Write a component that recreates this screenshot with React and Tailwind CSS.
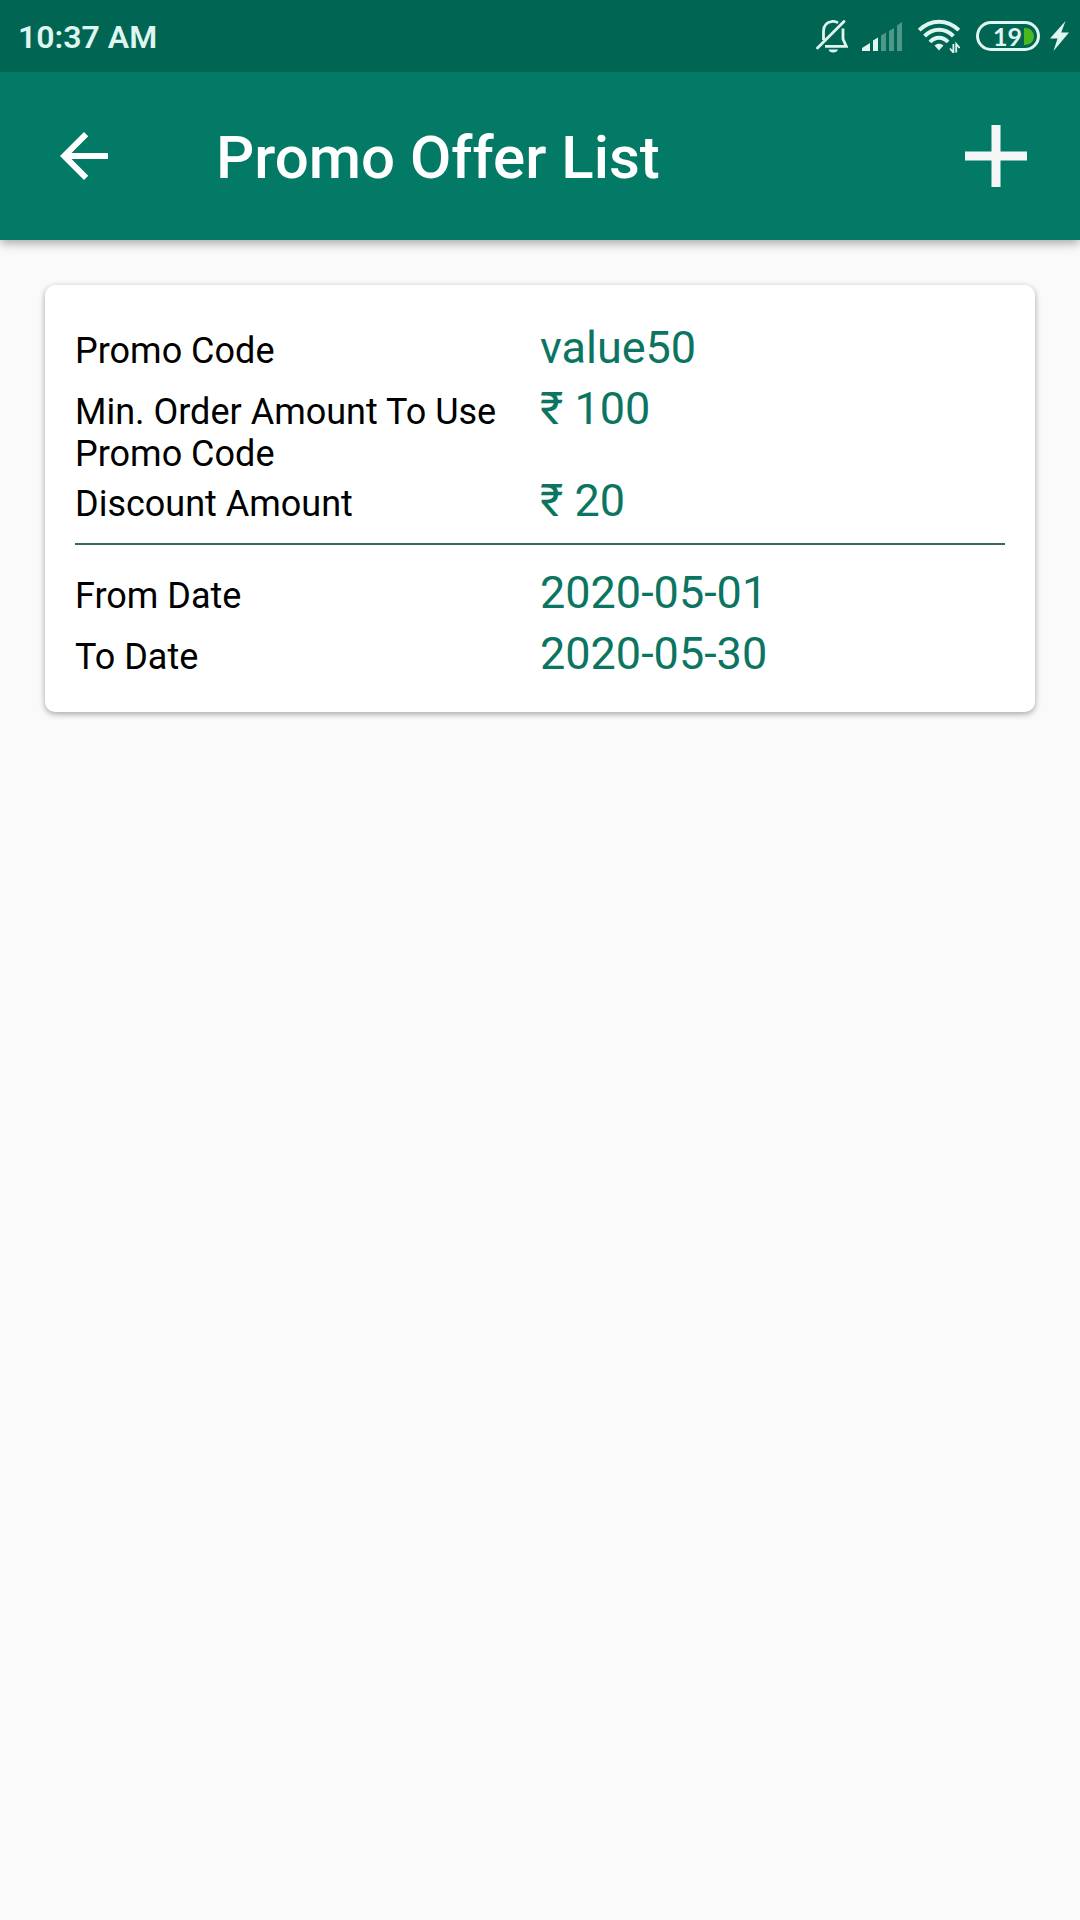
import React from 'react';
import { MdArrowBack } from 'react-icons/md';

const offer = [
  { label: 'Promo Code', value: 'value50' },
  { label: 'Min. Order Amount To Use Promo Code', value: '₹ 100' },
  { label: 'Discount Amount', value: '₹ 20' },
];

const validity = [
  { label: 'From Date', value: '2020-05-01' },
  { label: 'To Date', value: '2020-05-30' },
];

function StatusBar() {
  return (
    <div className="flex h-[72px] items-center justify-between bg-[#006653] pl-[18px] pr-[11px] text-[#dff5ef]">
      <span className="pt-[2px] text-[32px] font-semibold leading-[38px]">10:37 AM</span>
      <div className="flex items-center gap-4">
        <div className="flex items-center gap-[14px]">
          {/* Muted bell */}
          <svg className="h-[34px] w-8" viewBox="0 0 32 34" fill="none" stroke="currentColor" strokeWidth="2.8">
            <path d="M7.5 21V12.5C7.5 6.5 11 3 16.5 2.4C18.5 2.2 20.5 2.8 22 3.8" />
            <path d="M27 9.5V20L30.3 27.3H9" />
            <path d="M1.5 29L28 2.5" strokeLinecap="round" />
            <path d="M12.5 30.5H22C21.4 32.6 19.8 33.4 17.2 33.4C14.6 33.4 13 32.6 12.5 30.5Z" fill="currentColor" stroke="none" />
          </svg>

          {/* Mobile signal, two bars */}
          <svg className="h-[30px] w-10" viewBox="0 0 40 30" fill="currentColor">
            <path d="M0 30V27L8 22V30Z" />
            <path d="M11 30V19.5L16 16.5V30Z" />
            <g opacity="0.35">
              <path d="M19 30V14.5L24 11.5V30Z" />
              <path d="M27 30V10L32 7V30Z" />
              <path d="M35 30V4.5L40 1V30Z" />
            </g>
          </svg>
        </div>

        {/* Wi-Fi with data arrows */}
        <svg className="h-[34px] w-[42px]" viewBox="0 0 42 34" fill="none" stroke="currentColor" strokeWidth="4">
          <path d="M1.2 11.2C12.5 -0.2 29.5 -0.2 40.8 11.2" />
          <path d="M6.6 17.2C14.8 8.6 27.2 8.6 35.4 17.2" />
          <path d="M12 23C17.2 17.4 24.8 17.4 30 23" />
          <path d="M16.5 26.6C19 24.2 23 24.2 25.5 26.6L21 31.4Z" fill="currentColor" stroke="none" />
          <path d="M35.4 25V33.5L32 29.5M38.2 33.5V25L41.6 29" strokeWidth="1.8" />
        </svg>

        <div className="flex items-center gap-[10px]">
          <div className="flex h-[30px] w-16 items-center justify-end gap-[2px] rounded-full border-[3px] border-[#dff5ef] pr-[3px]">
            <span className="font-['Lato',sans-serif] text-[25px] font-bold leading-6">19</span>
            <span className="h-[17px] w-[10px] rounded-r-full bg-[#4cb81f]" />
          </div>
          <svg className="h-[30px] w-[19px]" viewBox="0 0 19 30" fill="currentColor">
            <path d="M15.5 0L0 17.5H7.5L3.5 30L19 11.5H11.2Z" />
          </svg>
        </div>
      </div>
    </div>
  );
}

function Header() {
  return (
    <header className="relative bg-[#027a65] shadow-[0_3px_10px_rgba(0,0,0,0.35)]">
      <StatusBar />
      <div className="flex h-[168px] items-center pl-12 pr-[53px]">
        <button type="button" aria-label="Back" className="text-white">
          <MdArrowBack className="size-[72px]" />
        </button>
        <h1 className="ml-24 flex-1 pt-1 text-[60px] font-medium leading-[70px] text-white">Promo Offer List</h1>
        <button type="button" aria-label="Add promo offer" className="text-[#f3f6f5]">
          <svg className="size-[62px]" viewBox="0 0 62 62" fill="currentColor">
            <path d="M26.5 0H35.5V26.5H62V35.5H35.5V62H26.5V35.5H0V26.5H26.5Z" />
          </svg>
        </button>
      </div>
    </header>
  );
}

function Details({ rows }) {
  return (
    <dl>
      {rows.map((row) => (
        <div key={row.label} className="grid grid-cols-2 items-baseline">
          <dt className="text-[36px] leading-[42px] text-black">{row.label}</dt>
          <dd className="pb-[10px] text-[45px] leading-[51px] text-[#0b7561]">{row.value}</dd>
        </div>
      ))}
    </dl>
  );
}

function App() {
  return (
    <div className="min-h-screen bg-[#fafafa] font-['Roboto',sans-serif]">
      <Header />
      <main className="p-[45px]">
        <section className="rounded-[10px] bg-white px-[30px] pb-[23px] pt-[37px] shadow-[0_2px_6px_rgba(0,0,0,0.35)]">
          <Details rows={offer} />
          <hr className="mb-[22px] mt-[7px] border-t-2 border-[#2f6b60]" />
          <Details rows={validity} />
        </section>
      </main>
    </div>
  );
}

export default App;
